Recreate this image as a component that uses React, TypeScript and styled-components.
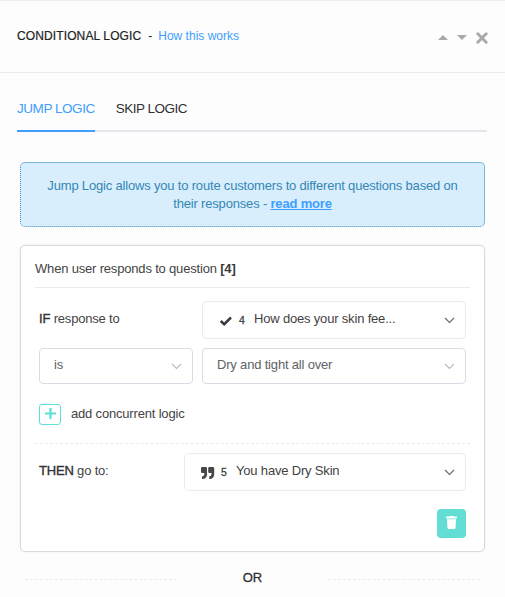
import React from "react";
import styled, { createGlobalStyle } from "styled-components";

const GlobalStyle = createGlobalStyle`
  *, *::before, *::after { box-sizing: border-box; }
  body {
    margin: 0;
    background: #fdfdfd;
    color: #444;
    font: 13px/18px "Liberation Sans", Arial, sans-serif;
    overflow: hidden;
  }
`;

const Panel = styled.main`
  width: 505px;
  height: 597px;
  overflow: hidden;
  background: #fdfdfd;
`;

const Header = styled.header`
  display: flex;
  align-items: center;
  justify-content: space-between;
  height: 73px;
  padding: 0 17px;
  border-top: 1px solid #eee;
  border-bottom: 1px solid #ebebeb;
`;

const HeaderTitle = styled.div`
  display: flex;
  font-size: 12px;
  white-space: pre;
  margin-top: -1px;
`;

const Title = styled.span`
  color: #222;
  letter-spacing: 0.12px;
  -webkit-text-stroke: 0.2px #222;
`;

const Separator = styled.span`
  margin: 0 6px 0 7px;
  color: #222;
`;

const HelpLink = styled.a`
  color: #409eff;
`;

const HeaderActions = styled.div`
  display: flex;
  align-items: center;
  gap: 9px;
  margin: 2px 0 0;
  color: #a9a9a9;
`;

const Icon = styled.svg`
  display: block;
  flex: none;
`;

const Tabs = styled.nav`
  display: flex;
  gap: 21px;
  height: 59px;
  margin: 0 18px 0 17px;
  border-bottom: 2px solid #e4e7ed;
`;

const Tab = styled.span<{ $active?: boolean }>`
  height: 59px;
  padding-top: 27px;
  font-size: 13.5px;
  letter-spacing: ${(p) => (p.$active ? "-0.45px" : "-0.5px")};
  color: ${(p) => (p.$active ? "#409eff" : "#303133")};
  border-bottom: ${(p) => (p.$active ? "2px solid #409eff" : "none")};
`;

const Notice = styled.section`
  height: 65px;
  margin: 30px 20px 0;
  padding: 14px 0;
  border: 1px dotted #3d91c4;
  border-top: 1px solid #7bb8dc;
  border-right: 1px solid #7bb8dc;
  border-radius: 5px;
  background: #d8eefd;
  color: #3586b5;
  text-align: center;
  letter-spacing: -0.18px;
`;

const MoreLink = styled.a`
  color: #409eff;
  font-weight: bold;
  text-decoration: underline;
`;

const Card = styled.section`
  height: 307px;
  margin: 18px 20px 0;
  padding: 0 14px;
  border: 1px solid #d9dadc;
  border-radius: 5px;
  background: #fff;
  box-shadow: 0 0 3px rgba(0, 0, 0, 0.07);
  letter-spacing: -0.18px;
`;

const CardHeading = styled.h2`
  height: 42px;
  margin: 0;
  padding-top: 14px;
  border-bottom: 1px solid #ebebeb;
  font-size: 13px;
  font-weight: normal;
`;

const Row = styled.div<{ $gapTop: number; $height: number }>`
  display: flex;
  align-items: center;
  justify-content: space-between;
  height: ${(p) => p.$height}px;
  margin: ${(p) => p.$gapTop}px 4px 0;
`;

const Label = styled.span`
  margin-top: -3px;
`;

const Keyword = styled.span`
  color: #303133;
  -webkit-text-stroke: 0.35px #303133;
`;

const QuestionRef = styled.b`
  color: #3a3a3a;
`;

const Select = styled.div<{ $width: number; $soft?: boolean }>`
  display: flex;
  align-items: center;
  width: ${(p) => p.$width}px;
  height: ${(p) => (p.$soft ? 38 : 36)}px;
  padding: 0 10px 0 ${(p) => (p.$soft ? 16 : 14)}px;
  border: 1px solid ${(p) => (p.$soft ? "#ebebeb" : "#d8dce5")};
  border-radius: ${(p) => (p.$soft ? 5 : 4)}px;
  background: #fff;
  color: ${(p) => (p.$soft ? "#3f3f3f" : "#606266")};
`;

const SelectText = styled.span`
  flex: 1;
  margin-top: -2px;
  white-space: nowrap;
`;

const QuestionNumber = styled.span`
  width: 15px;
  font-size: 10.5px;
  margin-top: -1px;
  -webkit-text-stroke: 0.3px #3f3f3f;
`;

const AddRow = styled.div`
  display: flex;
  align-items: center;
  gap: 10px;
  height: 21px;
  margin: 20px 4px 0;
`;

const AddButton = styled.span`
  display: grid;
  place-items: center;
  width: 22px;
  height: 21px;
  padding-bottom: 2px;
  border: 1px solid #5edfd6;
  border-radius: 3px;
`;

const AddLabel = styled.span`
  margin-top: -2px;
`;

const DashedRule = styled.div`
  height: 0;
  margin-top: 18px;
  border-top: 1px dashed #ebebeb;
`;

const CardFooter = styled.footer`
  display: flex;
  justify-content: flex-end;
  margin: 18px 4px 0;
`;

const DeleteButton = styled.button`
  display: flex;
  justify-content: center;
  width: 29px;
  height: 29px;
  padding: 7px 0 0;
  border: 0;
  border-radius: 4px;
  background: #62ded5;
`;

const OrDivider = styled.div`
  display: flex;
  align-items: center;
  justify-content: space-between;
  height: 18px;
  margin: 18px 25px 0;
  color: #303133;
`;

const OrLine = styled.span`
  width: 152px;
  border-top: 1px dashed #ebebeb;
`;

const OrText = styled.span`
  margin-top: -2px;
  -webkit-text-stroke: 0.3px #303133;
`;

const ChevronSvg = styled(Icon)`
  margin-top: 1px;
`;

const Chevron = ({ color }: { color: string }) => (
  <ChevronSvg width="11" height="7" viewBox="0 0 11 7">
    <path d="M1 1 5.5 5.5 10 1" fill="none" stroke={color} strokeWidth="1.1" />
  </ChevronSvg>
);

const CheckIcon = () => (
  <Icon width="14" height="10" viewBox="0 0 14 10">
    <path d="M1.7 5 5.2 8.2 12 1.5" fill="none" stroke="#3c3c3c" strokeWidth="2.5" />
  </Icon>
);

const QuoteIcon = () => (
  <Icon width="14" height="12" viewBox="0 0 14 12">
    <path
      d="M1.2 0H4.8Q6 0 6 1.2V7Q6 11.6 2 12H1V9.6Q3.4 9.3 3.4 6H1.2Q0 6 0 4.8V1.2Q0 0 1.2 0ZM8.4 0H12Q13.2 0 13.2 1.2V7Q13.2 11.6 9.2 12H8.2V9.6Q10.6 9.3 10.6 6H8.4Q7.2 6 7.2 4.8V1.2Q7.2 0 8.4 0Z"
      fill="#484848"
    />
  </Icon>
);

const IconSlot = styled.span`
  margin: 1px 6px 0 0;
`;

export default function App() {
  return (
    <>
      <GlobalStyle />
      <Panel>
        <Header>
          <HeaderTitle>
            <Title>CONDITIONAL LOGIC</Title>
            <Separator>-</Separator>
            <HelpLink>How this works</HelpLink>
          </HeaderTitle>
          <HeaderActions>
            <Icon width="10" height="5" viewBox="0 0 10 5">
              <path d="M0 5 5 0 10 5Z" fill="currentColor" />
            </Icon>
            <Icon width="10" height="5" viewBox="0 0 10 5">
              <path d="M0 0 5 5 10 0Z" fill="currentColor" />
            </Icon>
            <Icon width="12" height="12" viewBox="0 0 12 12">
              <path d="M1.8 1.8 10.2 10.2M10.2 1.8 1.8 10.2" stroke="currentColor" strokeWidth="2.9" strokeLinecap="round" />
            </Icon>
          </HeaderActions>
        </Header>

        <Tabs>
          <Tab $active>JUMP LOGIC</Tab>
          <Tab>SKIP LOGIC</Tab>
        </Tabs>

        <Notice>
          Jump Logic allows you to route customers to different questions based on
          <br />
          their responses - <MoreLink>read more</MoreLink>
        </Notice>

        <Card>
          <CardHeading>
            When user responds to question <QuestionRef>[4]</QuestionRef>
          </CardHeading>

          <Row $gapTop={13} $height={38}>
            <Label>
              <Keyword>IF</Keyword> response to
            </Label>
            <Select $width={264} $soft>
              <IconSlot>
                <CheckIcon />
              </IconSlot>
              <QuestionNumber>4</QuestionNumber>
              <SelectText>How does your skin fee...</SelectText>
              <Chevron color="#666" />
            </Select>
          </Row>

          <Row $gapTop={9} $height={36}>
            <Select $width={154}>
              <SelectText>is</SelectText>
              <Chevron color="#b4bac5" />
            </Select>
            <Select $width={264}>
              <SelectText>Dry and tight all over</SelectText>
              <Chevron color="#b4bac5" />
            </Select>
          </Row>

          <AddRow>
            <AddButton>
              <Icon width="11" height="11" viewBox="0 0 11 11">
                <path d="M5.5 0V11M0 5.5H11" stroke="#5edfd6" strokeWidth="2.2" />
              </Icon>
            </AddButton>
            <AddLabel>add concurrent logic</AddLabel>
          </AddRow>

          <DashedRule />

          <Row $gapTop={9} $height={38}>
            <Label>
              <Keyword>THEN</Keyword> go to:
            </Label>
            <Select $width={282} $soft>
              <IconSlot>
                <QuoteIcon />
              </IconSlot>
              <QuestionNumber>5</QuestionNumber>
              <SelectText>You have Dry Skin</SelectText>
              <Chevron color="#666" />
            </Select>
          </Row>

          <CardFooter>
            <DeleteButton aria-label="Delete">
              <Icon width="11" height="13" viewBox="0 0 11 13">
                <path d="M3.5 0H7.5V.6H11V2H0V.6H3.5Z" fill="#fff" />
                <path d="M.5 2H10.5V3.3H.5Z" fill="#fff" opacity=".5" />
                <path d="M1 3.2H10L9.5 12Q9.4 13 8.5 13H2.5Q1.6 13 1.5 12Z" fill="#fff" />
              </Icon>
            </DeleteButton>
          </CardFooter>
        </Card>

        <OrDivider>
          <OrLine />
          <OrText>OR</OrText>
          <OrLine />
        </OrDivider>
      </Panel>
    </>
  );
}
